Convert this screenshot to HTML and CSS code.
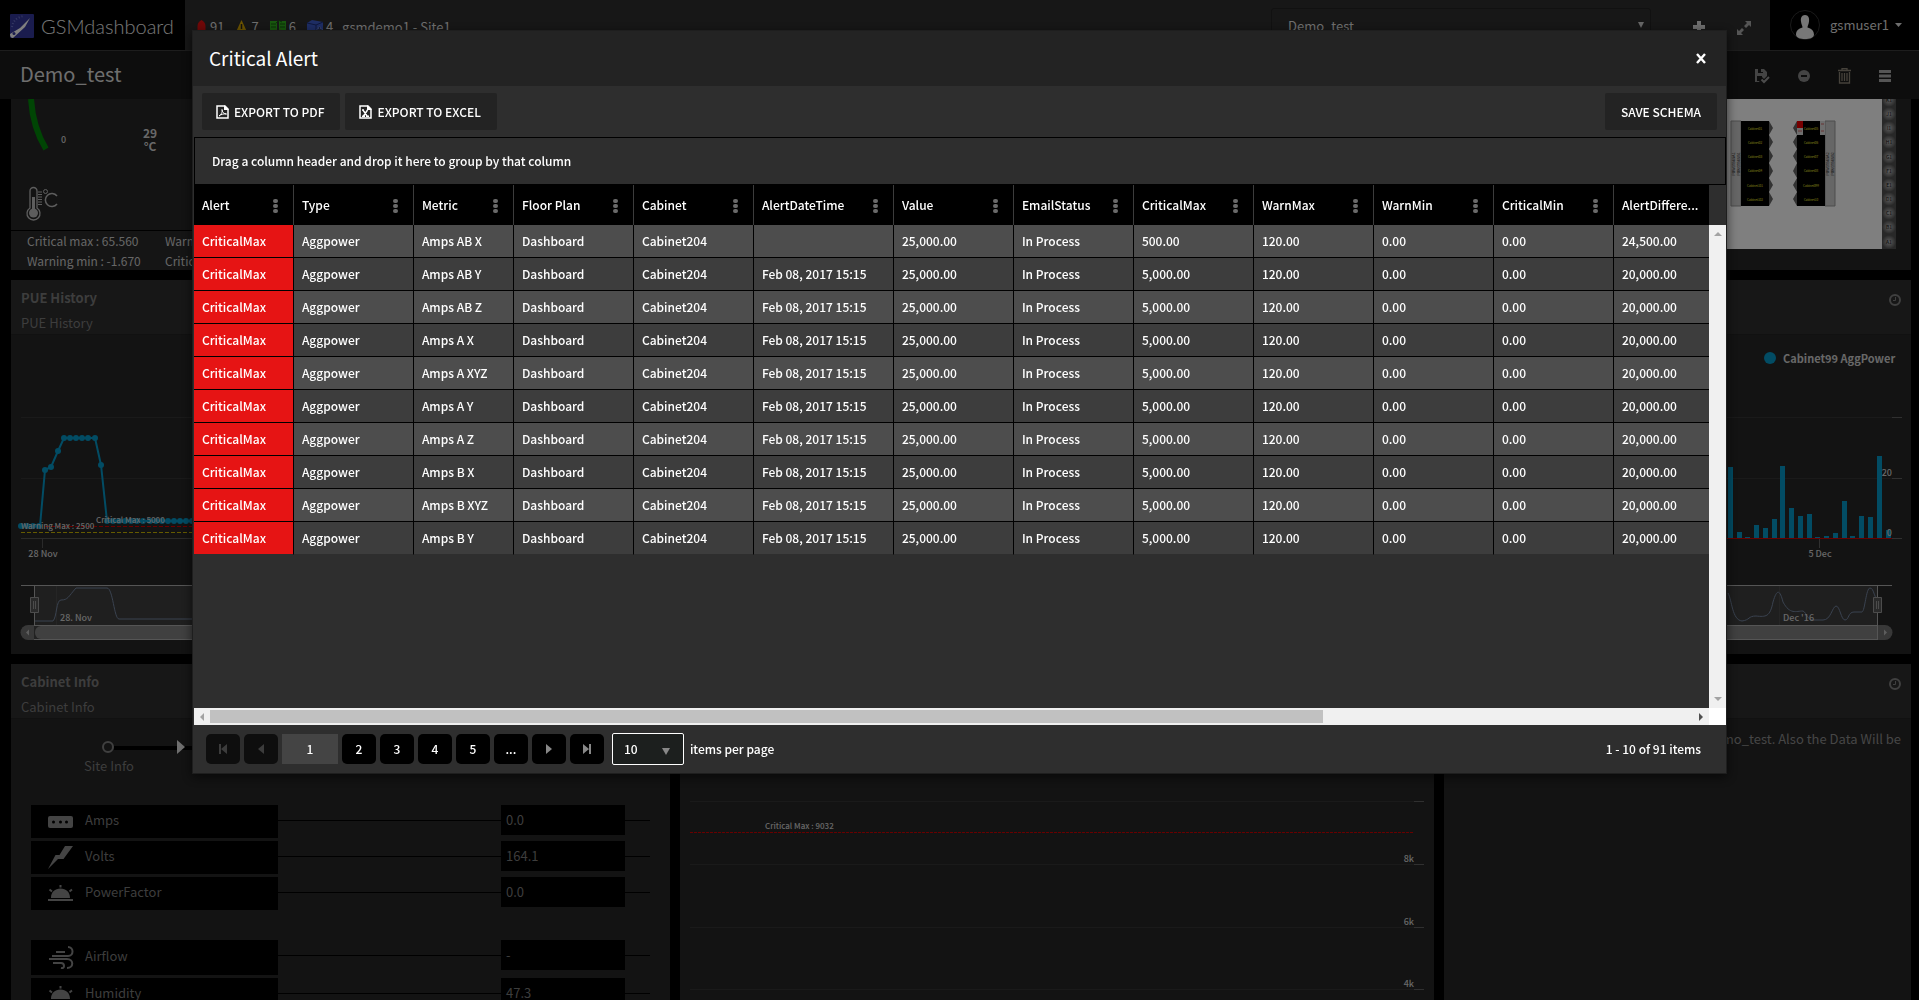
FILE: index.html
```html
<!DOCTYPE html>
<html lang="en">
<head>
<meta charset="utf-8">
<title>GSMdashboard</title>
<link rel="stylesheet" href="styles.css">
</head>
<body>
<div class="app">
  <header class="topbar">
    <a class="brand" href="#">
      <svg width="24" height="24" viewBox="0 0 24 24" aria-hidden="true"><rect width="24" height="24" rx="1" fill="#35399c"/><path d="M2 13C3 6 8 3 14 2" fill="none" stroke="#6d74c8" stroke-width="2" stroke-dasharray="1 2"/><path d="M0 20 10 14 20 4 15 13 3 24Q0 24 0 20Z" fill="#fff"/><circle cx="4" cy="19.500" r="1.500" fill="#35399c"/></svg>
      <span>GSMdashboard</span>
    </a>
    <ul class="status">
      <li><svg width="11" height="15" viewBox="0 0 11 15" aria-hidden="true"><path d="M1.500 12V6c0-3 2-5 4-6 2 1 4 3 4 6v6ZM0 13h11v2H0Z" fill="#e01010"/></svg>91</li>
      <li><svg width="13" height="15" viewBox="0 0 13 15" aria-hidden="true"><path d="M6.500 0 13 14H0Z" fill="#d8a800"/><path d="M6.500 4v5M6.500 10.500v2" stroke="#222" stroke-width="1.500"/></svg>7</li>
      <li><svg width="16" height="15" viewBox="0 0 16 15" aria-hidden="true"><path d="M0 1h7v12H0ZM9 1h7v12H9Z" fill="#2fae1c"/><path d="M1 4h5M1 7h5M10 4h5M10 7h5M6 3l3-2.500L12 2" stroke="#165c0c" fill="none"/><path d="M5 10l6 4M11 10l-6 4" stroke="#d22" stroke-width="1.500"/></svg>6</li>
      <li><svg width="16" height="15" viewBox="0 0 16 15" aria-hidden="true"><path d="M0 3 5 0l11 2v12H0Z" fill="#3c5bc8"/><path d="M0 3l9 2 7-3M9 5v9" stroke="#1c2f78" fill="none"/><path d="M10 9h5v5h-5ZM11.500 9V7h2v2" fill="#111c4c" stroke="#8fa4f4" stroke-width=".5"/></svg>4</li>
      <li>gsmdemo1 - Site1</li>
    </ul>
    <select class="dashboard-select" aria-label="Dashboard"><option>Demo_test</option></select>
    <button class="icon-btn add" aria-label="Add"><svg width="12" height="12" viewBox="0 0 12 12"><path d="M4 0h4v4h4v4H8v4H4V8H0V4h4Z" fill="#ddd"/></svg></button>
    <button class="icon-btn expand" aria-label="Full screen"><svg width="14" height="14" viewBox="0 0 14 14"><path d="M8 0h6v6l-2-2-3 3-2-2 3-3ZM6 14H0V8l2 2 3-3 2 2-3 3Z" fill="#aaa"/></svg></button>
    <button class="user"><svg width="30" height="30" viewBox="0 0 30 30" aria-hidden="true"><circle cx="15" cy="15" r="14.500" fill="#000" stroke="#333"/><path d="M15 5c3.500 0 4.500 3 4 6.500-.3 3-1.500 4.500-1.500 6 4 1 6.500 3 6.500 7.500-1 3-4 4-9 4s-8-1-9-4c0-4.500 2.500-6.500 6.500-7.500 0-1.500-1.200-3-1.500-6C10.500 8 11.500 5 15 5Z" fill="#eee"/></svg>gsmuser1<svg width="7" height="4" viewBox="0 0 7 4" aria-hidden="true"><path d="M0 0h7L3.500 4Z" fill="#ddd"/></svg></button>
  </header>

  <div class="titlebar">
    <h1>Demo_test</h1>
    <div class="tools">
      <button class="icon-btn" aria-label="Save"><svg width="16" height="16" viewBox="0 0 16 16"><path d="M1 1h9l3 3v4l-3 3-2-2-3 5H1Z" fill="#888"/><path d="M4 1h5v4H4ZM3 8h5v5H3Z" fill="#1a1a1a"/><path d="M7 1h2v3H7Z" fill="#888"/><path d="M7.500 11.500 10 14l5-5" fill="none" stroke="#999" stroke-width="2"/></svg></button>
      <button class="icon-btn" aria-label="Remove"><svg width="12" height="12" viewBox="0 0 12 12"><circle cx="6" cy="6" r="6" fill="#888"/><path d="M3 5h6v2H3Z" fill="#1a1a1a"/></svg></button>
      <button class="icon-btn" aria-label="Delete"><svg width="13" height="16" viewBox="0 0 13 16"><path d="M0 2.500h13M4 2V.5h5V2M1.500 4v11h10V4M4 5v8M6.500 5v8M9 5v8" fill="none" stroke="#8c8476" stroke-width="1.300"/></svg></button>
      <button class="icon-btn" aria-label="Menu"><svg width="12" height="12" viewBox="0 0 12 12"><path d="M0 0h12v3H0ZM0 4.500h12v3H0ZM0 9h12v3H0Z" fill="#aaa"/></svg></button>
    </div>
  </div>

  <main class="board">
    <section class="panel temperature">
      <svg class="gauge" width="200" height="131" viewBox="11 99 200 131" role="img" aria-label="Temperature">
        <path d="M31 99Q33 128 46 149" fill="none" stroke="#008a08" stroke-width="6"/>
        <text class="t-small" x="61" y="143">0</text>
        <text class="t-gauge" x="150" y="138" text-anchor="middle">29</text>
        <text class="t-gauge" x="150" y="151" text-anchor="middle">°C</text>
        <g fill="none" stroke="#bbb"><path d="M30 208V191a3.500 3.500 0 0 1 7 0v17a6.500 6.500 0 1 1-7 0Z" stroke-width="1.300"/><path d="M33.500 197v14" stroke-width="3"/><path d="M38 192h4M38 194.500h4M38 197h4M38 199.500h4M38 202h4M38 204.500h4"/><circle cx="45.500" cy="191.500" r="2"/><path d="M57 196a6.500 6.500 0 1 0 0 8" stroke-width="1.500"/></g>
        <circle cx="33.500" cy="213" r="4.500" fill="#bbb"/>
      </svg>
      <ul class="limits"><li>Critical max : 65.560</li><li>Warning max : 60.000</li><li>Warning min : -1.670</li><li>Critical min : -9.000</li></ul>
    </section>
    <section class="panel floor">
      <svg width="200" height="171" viewBox="1711 99 200 171" role="img" aria-label="Floor plan">
        <defs><radialGradient id="knob"><stop offset="0" stop-color="#bbb"/><stop offset="1" stop-color="#505050"/></radialGradient></defs>
        <path d="M1711 99h171v150h-171Z" fill="#fff"/>
        <path d="M1731 121h10v85h-10ZM1825 121h10v85h-10Z" fill="#ccc" stroke="#999"/>
        <path d="M1769 121l4 7-4 7 4 7-4 7 4 7-4 7 4 8-4 7 4 7-4 7 4 7-4 7ZM1797 121l-4 7 4 7-4 7 4 7-4 7 4 7-4 8 4 7-4 7 4 7-4 7 4 7Z" fill="#666"/>
        <path d="M1741 121h28v85h-28ZM1797 121h28v85h-28Z" fill="#000"/>
        <path d="M1797 121h6v7h-6Z" fill="#e00"/><path d="M1797 128h6v7h-6ZM1820 121h5v14h-5Z" fill="#ddd"/>
        <path d="M1798 131h4M1821 124h3M1821 131h3" stroke="#c66"/>
        <g class="t-cab" text-anchor="middle">
          <text x="1755" y="130">Cabinet01</text><text x="1755" y="144">Cabinet02</text><text x="1755" y="158">Cabinet03</text><text x="1755" y="172">Cabinet04</text><text x="1755" y="187">Cabinet101</text><text x="1755" y="201">Cabinet102</text>
          <text x="1811" y="130">Cabinet05</text><text x="1811" y="144">Cabinet06</text><text x="1811" y="158">Cabinet07</text><text x="1811" y="172">Cabinet08</text><text x="1811" y="187">Cabinet099</text><text x="1811" y="201">Cabinet10</text>
        </g>
        <g class="t-bus" text-anchor="middle"><text transform="translate(1735 164) rotate(-90)">PowerBusA1</text><text transform="translate(1740 164) rotate(-90)">PowerBusB1</text><text transform="translate(1829 164) rotate(-90)">PowerBusA2</text><text transform="translate(1834 164) rotate(-90)">PowerBusB2</text></g>
        <path d="M1882 99h14v150h-14Z" fill="#505050"/>
        <g fill="url(#knob)"><circle cx="1889" cy="100" r="7"/><circle cx="1889" cy="114" r="7"/><circle cx="1889" cy="128" r="7"/><circle cx="1889" cy="142" r="7"/><circle cx="1889" cy="157" r="7"/><circle cx="1889" cy="171" r="7"/><circle cx="1889" cy="185" r="7"/><circle cx="1889" cy="199" r="7"/><circle cx="1889" cy="213" r="7"/><circle cx="1889" cy="227" r="7"/><circle cx="1889" cy="242" r="7"/></g>
        <g class="t-knob" text-anchor="middle"><text x="1889" y="102">K1</text><text x="1889" y="116">J1</text><text x="1889" y="130">I1</text><text x="1889" y="144">H1</text><text x="1889" y="159">G1</text><text x="1889" y="173">F1</text><text x="1889" y="187">E1</text><text x="1889" y="201">D1</text><text x="1889" y="215">C1</text><text x="1889" y="229">B1</text><text x="1889" y="244">A1</text></g>
      </svg>
    </section>

    <section class="panel history">
      <div class="panel-head"><div><h2>PUE History</h2><p>PUE History</p></div></div>
      <svg width="200" height="319" viewBox="11 335 200 319" role="img" aria-label="PUE history chart">
        <path d="M21 417.500h190M21 478.500h190" stroke="#343434"/>
        <path d="M21 538.500h190M42.500 539v9" stroke="#555" fill="none"/>
        <path d="M21 526.500h190" stroke="#d00000" stroke-dasharray="4 2"/>
        <path d="M21 532.500h190" stroke="#c8b400" stroke-dasharray="4 2"/>
        <path d="M21 526H40L45 470 51 467 58 451 64 438H95L101 465 107 521H211" fill="none" stroke="#0498c8" stroke-width="2"/>
        <g fill="#0498c8"><circle cx="21" cy="526" r="3"/><circle cx="27" cy="526" r="3"/><circle cx="33" cy="526" r="3"/><circle cx="39" cy="526" r="3"/><circle cx="45" cy="470" r="3"/><circle cx="51" cy="467" r="3"/><circle cx="58" cy="451" r="3"/><circle cx="64" cy="438" r="3"/><circle cx="70" cy="438" r="3"/><circle cx="76" cy="438" r="3"/><circle cx="82" cy="438" r="3"/><circle cx="88" cy="438" r="3"/><circle cx="95" cy="438" r="3"/><circle cx="101" cy="465" r="3"/><circle cx="107" cy="521" r="3"/><circle cx="113" cy="521" r="3"/><circle cx="119" cy="521" r="3"/><circle cx="125" cy="521" r="3"/><circle cx="131" cy="521" r="3"/><circle cx="137" cy="521" r="3"/><circle cx="143" cy="521" r="3"/><circle cx="150" cy="521" r="3"/><circle cx="156" cy="521" r="3"/><circle cx="162" cy="521" r="3"/><circle cx="168" cy="521" r="3"/><circle cx="174" cy="521" r="3"/><circle cx="180" cy="521" r="3"/><circle cx="186" cy="521" r="3"/><circle cx="192" cy="521" r="3"/></g>
        <text class="t-plot" x="21" y="529">Warning Max : 2500</text>
        <text class="t-plot" x="96" y="523">Critical Max : 5000</text>
        <text class="t-axis" x="43" y="557" text-anchor="middle">28 Nov</text>
        <path d="M34 586h177v39H34Z" fill="#3e3e3e"/><path d="M56.500 586v39" stroke="#4a4a4a"/>
        <path d="M34 621H53C57 617 56 600 61 600C68 600 68 597 76 588H107C113 588 114 619 119 619H211" fill="none" stroke="#7485a0"/>
        <path d="M21 585.500h190M34.500 586v54" stroke="#aaa"/>
        <text class="t-axis" x="60" y="621">28. Nov</text>
        <path d="M34 626h177v13H34Z" fill="#444"/><rect x="35" y="626" width="300" height="13" rx="6" fill="#808080"/>
        <path d="M34 625.500h177M34 639.500h177" stroke="#aaa"/>
        <path d="M34 625H28a7.500 7.500 0 0 0 0 15h6Z" fill="#707070"/><path d="M29 629.500v6l-3-3Z" fill="#bbb"/>
        <path d="M30.500 597.500h8v15h-8Z" fill="#555" stroke="#999"/><path d="M33.500 601v8M35.500 601v8" stroke="#999"/>
      </svg>
    </section>
    <section class="panel power">
      <div class="panel-head"><svg class="clock" width="12" height="12" viewBox="0 0 12 12" aria-hidden="true"><circle cx="6" cy="6" r="5" fill="none" stroke="#808080" stroke-width="2"/><path d="M6.500 3v3.500H4" fill="none" stroke="#808080"/></svg></div>
      <svg width="200" height="319" viewBox="1711 335 200 319" role="img" aria-label="Cabinet99 AggPower chart">
        <circle cx="1770" cy="358" r="6" fill="#0498c8"/><text class="t-legend" x="1783" y="363">Cabinet99 AggPower</text>
        <path d="M1711 417.500h181M1711 478.500h181" stroke="#343434"/><path d="M1892 417.500h10M1892 478.500h10M1892 538.500h10M1819.500 539v9" stroke="#606060"/>
        <path d="M1728 467h5v71h-5ZM1737 532h5v6h-5ZM1745 537h5v1h-5ZM1754 525h5v13h-5ZM1763 528h5v10h-5ZM1772 519h5v19h-5ZM1780 466h5v72h-5ZM1789 508h5v30h-5ZM1798 516h5v22h-5ZM1807 514h5v24h-5ZM1815 537h5v1h-5ZM1824 536h5v2h-5ZM1833 533h5v5h-5ZM1842 501h5v37h-5ZM1850 536h5v2h-5ZM1859 516h5v22h-5ZM1868 517h5v21h-5ZM1877 456h5v82h-5ZM1886 530h5v8h-5Z" fill="#0498c8"/>
        <path d="M1711 538.500h181" stroke="#d00000"/>
        <text class="t-axis" x="1892" y="476" text-anchor="end">20</text><text class="t-axis" x="1892" y="536" text-anchor="end">0</text><text class="t-axis" x="1820" y="557" text-anchor="middle">5 Dec</text>
        <path d="M1711 586h166v39h-166Z" fill="#3e3e3e"/><path d="M1779.500 586v39" stroke="#4a4a4a"/>
        <path d="M1728 593C1732 600 1732 620 1742 621C1750 620 1748 616 1756 616C1766 617 1770 617 1773 602C1777 588 1780 590 1783 602C1790 615 1796 611 1803 611C1807 613 1807 620 1813 620H1823C1831 620 1832 607 1836 606C1840 606 1841 620 1845 620C1849 620 1848 612 1854 612H1862C1865 611 1866 588 1870 588C1874 588 1874 598 1877 598" fill="none" stroke="#7485a0"/>
        <path d="M1711 585.500h181M1877.500 586v54" stroke="#aaa"/>
        <text class="t-axis" x="1783" y="621">Dec '16</text>
        <path d="M1711 626h166v13h-166Z" fill="#808080"/><path d="M1711 625.500h166M1711 639.500h166" stroke="#aaa"/>
        <path d="M1878 625h7a7.500 7.500 0 0 1 0 15h-7Z" fill="#707070"/><path d="M1884 629.500v6l3-3Z" fill="#bbb"/>
        <path d="M1873.500 597.500h8v15h-8Z" fill="#555" stroke="#999"/><path d="M1876.500 601v8M1878.500 601v8" stroke="#999"/>
      </svg>
    </section>

    <section class="panel cabinet">
      <div class="panel-head"><div><h2>Cabinet Info</h2><p>Cabinet Info</p></div></div>
      <div class="steps"><svg width="130" height="16" viewBox="0 0 130 16" aria-hidden="true"><path d="M19 9h111" stroke="#000" stroke-width="4"/><circle cx="13" cy="8" r="5" fill="none" stroke="#808080" stroke-width="2"/><path d="M82 1l8 7-8 7Z" fill="#ddd"/></svg><span>Site Info</span></div>
      <ul class="readings">
        <li><span class="name"><svg width="26" height="24" viewBox="0 0 26 24" aria-hidden="true"><rect y="6" width="25" height="12" rx="2" fill="#888"/><circle cx="5.500" cy="12" r="1.500"/><circle cx="12.500" cy="12" r="1.500"/><circle cx="18.500" cy="12" r="1.500"/></svg><span>Amps</span></span><span class="value">0.0</span></li>
        <li><span class="name"><svg width="26" height="24" viewBox="0 0 26 24" aria-hidden="true"><path d="M17 0h8l-9.500 13H10L0 23 7.500 9h4Z" fill="#888"/></svg><span>Volts</span></span><span class="value">164.1</span></li>
        <li><span class="name"><svg width="26" height="24" viewBox="0 0 26 24" aria-hidden="true"><path d="M3 16c0-6 4-9.500 9.500-9.500S22 10 22 16ZM0 17h25v2H0Z" fill="#888"/><path d="M12.500 3v2.500M1.500 7.500l2.500 2M24 7.500l-2.500 2" stroke="#888" stroke-width="2"/></svg><span>PowerFactor</span></span><span class="value">0.0</span></li>
        <li class="group"><span class="name"><svg width="26" height="24" viewBox="0 0 26 24" aria-hidden="true"><path d="M8 6h9M4 10h16c6 0 6-9 0-9M1 13h18c7 0 7 9 0 9M5 17h8c4 0 4 6 0 5" fill="none" stroke="#888" stroke-width="2"/></svg><span>Airflow</span></span><span class="value">-</span></li>
        <li><span class="name"><svg width="26" height="24" viewBox="0 0 26 24" aria-hidden="true"><path d="M3 16c0-6 4-9.500 9.500-9.500S22 10 22 16ZM0 17h25v2H0Z" fill="#888"/><path d="M12.500 3v2.500M1.500 7.500l2.500 2M24 7.500l-2.500 2" stroke="#888" stroke-width="2"/></svg><span>Humidity</span></span><span class="value">47.3</span></li>
      </ul>
    </section>
    <section class="panel limit-chart">
      <svg width="754" height="236" viewBox="680 764 754 236" role="img" aria-label="Critical limit chart">
        <path d="M690 801.500h724M690 864.500h724M690 927.500h724M690 989.500h724" stroke="#343434"/><path d="M1414 801.500h10M1414 864.500h10M1414 927.500h10M1414 989.500h10" stroke="#606060"/>
        <path d="M690 832.500h724" stroke="#d00000" stroke-dasharray="3 1"/>
        <text class="t-plot" x="765" y="829">Critical Max : 9032</text>
        <g class="t-axis" text-anchor="end"><text x="1414" y="862">8k</text><text x="1414" y="925">6k</text><text x="1414" y="987">4k</text></g>
      </svg>
    </section>
    <section class="panel note">
      <div class="panel-head"><svg class="clock" width="12" height="12" viewBox="0 0 12 12" aria-hidden="true"><circle cx="6" cy="6" r="5" fill="none" stroke="#808080" stroke-width="2"/><path d="M6.500 3v3.500H4" fill="none" stroke="#808080"/></svg></div>
      <p class="message">Demo_test. Also the Data Will be</p>
    </section>
  </main>
</div>

<div class="backdrop">
  <div class="modal" role="dialog" aria-labelledby="dlg-title">
    <div class="modal-head"><h2 id="dlg-title">Critical Alert</h2><button class="close" aria-label="Close"><svg width="10" height="11" viewBox="0 0 10 11"><path d="M1 1l8 9M9 1l-8 9" stroke="#fff" stroke-width="2.400"/></svg></button></div>
    <div class="toolbar">
      <button class="tool-btn"><svg width="13" height="14" viewBox="0 0 13 14" aria-hidden="true"><path d="M1 1h8l3 3v9H1Z" fill="none" stroke="#fff" stroke-width="1.500"/><path d="M8 0v5h5L8 0" fill="#fff"/><path d="M3 11c3-2 3.500-5 3-6.500C6 7 8 9 10.500 9 7 8.500 5 9.500 3 11Z" fill="none" stroke="#fff"/></svg>EXPORT TO PDF</button>
      <button class="tool-btn"><svg width="13" height="14" viewBox="0 0 13 14" aria-hidden="true"><path d="M1 1h8l3 3v9H1Z" fill="none" stroke="#fff" stroke-width="1.500"/><path d="M8 0v5h5L8 0" fill="#fff"/><path d="M4 5l4 6M8.500 5l-4 6M3 11.200h3M7 11.200h3M3 5h2" stroke="#fff" stroke-width="1.400"/></svg>EXPORT TO EXCEL</button>
      <button class="tool-btn save">SAVE SCHEMA</button>
    </div>
    <div class="group-drop">Drag a column header and drop it here to group by that column</div>
    <div class="grid">
      <div class="viewport">
        <table>
          <colgroup><col class="w99"><col class="w120"><col class="w100"><col class="w120"><col class="w120"><col class="w140"><col class="w120"><col class="w120"><col class="w120"><col class="w120"><col class="w120"><col class="w120"><col class="w120"></colgroup>
          <thead><tr><th>Alert</th><th>Type</th><th>Metric</th><th>Floor Plan</th><th>Cabinet</th><th>AlertDateTime</th><th>Value</th><th>EmailStatus</th><th>CriticalMax</th><th>WarnMax</th><th>WarnMin</th><th>CriticalMin</th><th>AlertDiffere...</th></tr></thead>
          <tbody>
            <tr><td>CriticalMax</td><td>Aggpower</td><td>Amps AB X</td><td>Dashboard</td><td>Cabinet204</td><td></td><td>25,000.00</td><td>In Process</td><td>500.00</td><td>120.00</td><td>0.00</td><td>0.00</td><td>24,500.00</td></tr>
            <tr><td>CriticalMax</td><td>Aggpower</td><td>Amps AB Y</td><td>Dashboard</td><td>Cabinet204</td><td>Feb 08, 2017 15:15</td><td>25,000.00</td><td>In Process</td><td>5,000.00</td><td>120.00</td><td>0.00</td><td>0.00</td><td>20,000.00</td></tr>
            <tr><td>CriticalMax</td><td>Aggpower</td><td>Amps AB Z</td><td>Dashboard</td><td>Cabinet204</td><td>Feb 08, 2017 15:15</td><td>25,000.00</td><td>In Process</td><td>5,000.00</td><td>120.00</td><td>0.00</td><td>0.00</td><td>20,000.00</td></tr>
            <tr><td>CriticalMax</td><td>Aggpower</td><td>Amps A X</td><td>Dashboard</td><td>Cabinet204</td><td>Feb 08, 2017 15:15</td><td>25,000.00</td><td>In Process</td><td>5,000.00</td><td>120.00</td><td>0.00</td><td>0.00</td><td>20,000.00</td></tr>
            <tr><td>CriticalMax</td><td>Aggpower</td><td>Amps A XYZ</td><td>Dashboard</td><td>Cabinet204</td><td>Feb 08, 2017 15:15</td><td>25,000.00</td><td>In Process</td><td>5,000.00</td><td>120.00</td><td>0.00</td><td>0.00</td><td>20,000.00</td></tr>
            <tr><td>CriticalMax</td><td>Aggpower</td><td>Amps A Y</td><td>Dashboard</td><td>Cabinet204</td><td>Feb 08, 2017 15:15</td><td>25,000.00</td><td>In Process</td><td>5,000.00</td><td>120.00</td><td>0.00</td><td>0.00</td><td>20,000.00</td></tr>
            <tr><td>CriticalMax</td><td>Aggpower</td><td>Amps A Z</td><td>Dashboard</td><td>Cabinet204</td><td>Feb 08, 2017 15:15</td><td>25,000.00</td><td>In Process</td><td>5,000.00</td><td>120.00</td><td>0.00</td><td>0.00</td><td>20,000.00</td></tr>
            <tr><td>CriticalMax</td><td>Aggpower</td><td>Amps B X</td><td>Dashboard</td><td>Cabinet204</td><td>Feb 08, 2017 15:15</td><td>25,000.00</td><td>In Process</td><td>5,000.00</td><td>120.00</td><td>0.00</td><td>0.00</td><td>20,000.00</td></tr>
            <tr><td>CriticalMax</td><td>Aggpower</td><td>Amps B XYZ</td><td>Dashboard</td><td>Cabinet204</td><td>Feb 08, 2017 15:15</td><td>25,000.00</td><td>In Process</td><td>5,000.00</td><td>120.00</td><td>0.00</td><td>0.00</td><td>20,000.00</td></tr>
            <tr><td>CriticalMax</td><td>Aggpower</td><td>Amps B Y</td><td>Dashboard</td><td>Cabinet204</td><td>Feb 08, 2017 15:15</td><td>25,000.00</td><td>In Process</td><td>5,000.00</td><td>120.00</td><td>0.00</td><td>0.00</td><td>20,000.00</td></tr>
          </tbody>
        </table>
      </div>
      <div class="vbar"><i class="tri up"></i><i class="tri down"></i></div>
      <div class="hbar"><i class="tri left"></i><span class="track"><span class="thumb"></span></span><i class="tri right"></i></div>
      <div class="corner"></div>
    </div>
    <div class="pager">
      <button class="pg" disabled aria-label="First page"><svg width="10" height="10" viewBox="0 0 10 10"><path d="M1 0h2v10H1ZM9 0v10L3 5Z"/></svg></button>
      <button class="pg" disabled aria-label="Previous page"><svg width="10" height="10" viewBox="0 0 10 10"><path d="M8 0v10L2 5Z"/></svg></button>
      <button class="pg current">1</button><button class="pg">2</button><button class="pg">3</button><button class="pg">4</button><button class="pg">5</button><button class="pg">...</button>
      <button class="pg" aria-label="Next page"><svg width="10" height="10" viewBox="0 0 10 10"><path d="M2 0v10l6-5Z"/></svg></button>
      <button class="pg" aria-label="Last page"><svg width="10" height="10" viewBox="0 0 10 10"><path d="M7 0h2v10H7ZM1 0v10l6-5Z"/></svg></button>
      <select id="page-size" class="page-size"><option>10</option></select>
      <label for="page-size">items per page</label>
      <span class="total">1 - 10 of 91 items</span>
    </div>
  </div>
</div>
</body>
</html>
```
FILE: styles.css
```css
* { box-sizing: border-box; }
body { margin: 0; background: #000; color: #fff; font: 13px/20px "Noto Sans CJK SC", "Open Sans", sans-serif; overflow: hidden; }
h1, h2, p, ul { margin: 0; padding: 0; font-weight: 400; }
ul { list-style: none; }
button, select { font: inherit; color: inherit; border: 0; background: none; padding: 0; margin: 0; }
svg { flex: none; }

.app { height: 100vh; display: flex; flex-direction: column; overflow: hidden; }

/* top navigation */
.topbar { height: 51px; flex: none; display: flex; align-items: center; background: #2e2e2e; border-bottom: 1px solid #3a3a3a; }
.brand { align-self: stretch; width: 185px; padding: 2px 0 0 10px; display: flex; align-items: center; gap: 7px; background: #000; color: #eee; text-decoration: none; font: 300 20px/24px Lato, sans-serif; }
.status { display: flex; gap: 11px; margin-left: 11px; padding-top: 4px; flex: 1; }
.status li { display: flex; align-items: center; gap: 3px; color: #ddd; }
.status li:last-child { margin-left: -2px; }
.dashboard-select { width: 380px; height: 34px; padding: 2px 10px 0 16px; border: 1px solid #222; border-radius: 3px; appearance: none; color: #ddd; background: url("data:image/svg+xml,%3Csvg xmlns='http://www.w3.org/2000/svg' width='6' height='6'%3E%3Cpath d='M0 0h6L3 6Z' fill='%23ccc'/%3E%3C/svg%3E") no-repeat right 6px center; }
.icon-btn { display: flex; align-items: center; justify-content: center; }
.add { margin-left: 42px; padding-top: 3px; }
.expand { margin: 6px 19px 0 32px; }
.user { align-self: stretch; width: 149px; padding-left: 20px; display: flex; align-items: center; gap: 10px; background: #000; color: #ddd; }
.user svg:last-child { margin-left: -4px; }

.titlebar { height: 48px; flex: none; display: flex; align-items: center; justify-content: space-between; padding: 0 28px 0 20px; background: #1a1a1a; }
.titlebar h1 { font-size: 20px; line-height: 24px; padding-bottom: 2px; color: #ddd; }
.tools { display: flex; align-items: center; gap: 28px; padding-top: 2px; }

/* widget board */
.board { flex: 1; min-height: 0; padding: 0 8px 0 11px; display: grid; grid-template-columns: 659fr 754fr 467fr; grid-template-rows: 171px 374px 1fr; gap: 10px; }
.panel { background: #262626; min-width: 0; overflow: hidden; display: flex; flex-direction: column; }
.history, .temperature { grid-column: 1 / 3; }
.limits { display: grid; grid-template-columns: 138px 138px; align-content: start; padding: 0 16px; border-top: 1px solid #000; background: #2a2a2a; flex: 1; font-size: 12px; color: #ccc; }
.panel > svg { display: block; }
.floor > svg, .power > svg { align-self: flex-end; }
.limit-chart { padding-top: 100px; }
.limit-chart svg { width: 100%; }
.panel-head { height: 55px; flex: none; padding: 8px 10px; background: #2e2e2e; border-bottom: 1px solid #222; display: flex; color: #7a7a7a; }
.panel-head h2 { font-size: 13px; font-weight: 700; line-height: 20px; margin-bottom: 5px; }
.panel-head p { line-height: 20px; }
.clock { margin: 6px 0 0 auto; }
.message { padding: 10px; color: #8c8c8c; text-align: right; white-space: nowrap; }
.steps { margin: 20px 0 0 84px; padding-bottom: 26px; display: flex; flex-direction: column; align-items: flex-start; color: #7a7a7a; }
.steps span { line-height: 22px; padding-bottom: 2px; }
.steps svg { margin-left: 0; }
.steps { margin-left: 73px; }
.steps svg { margin-left: 11px; }
.readings { padding: 0 20px; color: #7a7a7a; }
.readings li { display: flex; align-items: flex-start; margin-bottom: 3px; }
.name { width: 247px; height: 33px; display: flex; align-items: center; gap: 11px; padding-left: 17px; background: #000; }
.name span { padding-bottom: 4px; }
.value { order: 2; width: 124px; height: 30px; line-height: 30px; padding-left: 5px; background: #000; }
.readings li::before, .readings li::after { content: ""; height: 1px; margin-top: 15px; background: #000; }
.readings li::before { order: 1; flex: 1; }
.readings li::after { order: 3; width: 25px; }
.readings .group { margin-top: 30px; }
.group .name { height: 35px; }

/* chart text */
text { fill: #d0d0d0; }
.t-small, .t-axis { font-size: 9px; font-weight: 500; }
.t-plot { font-size: 8px; font-weight: 500; }
.t-gauge { font-size: 12px; font-weight: 700; }
.t-legend { font-size: 11px; font-weight: 700; }
.t-cab text { font-size: 3px; fill: #ee3; }
.t-bus text { font-size: 4px; fill: #222; }
.t-knob text { font-size: 5px; fill: #111; }

/* dialog */
.backdrop { position: fixed; inset: 0; background: rgba(0, 0, 0, .5); }
.modal { width: 80%; margin: 30px auto 0; background: #2e2e2e; border: 1px solid #1e1e1e; box-shadow: 0 3px 10px rgba(0, 0, 0, .6); font-size: 12px; font-weight: 500; }
.modal-head { height: 55px; padding: 0 20px 0 16px; display: flex; align-items: center; justify-content: space-between; background: #232323; }
.modal-head h2 { font-size: 19px; line-height: 24px; padding-bottom: 2px; }
.close { display: flex; }
.toolbar { height: 51px; padding: 0 9px; display: flex; align-items: center; gap: 5px; }
.tool-btn { height: 37px; padding: 0 16px 0 14px; display: flex; align-items: center; gap: 5px; border-radius: 2px; background: #232323; }
.save { margin-left: auto; padding: 0 16px; }
.group-drop { height: 48px; margin-left: 1px; padding: 0 17px; line-height: 46px; border: 1px solid #000; }
.grid { margin-left: 1px; display: grid; grid-template-columns: minmax(0, 1fr) 17px; grid-template-rows: 523px 17px; }
.viewport { overflow: hidden; }
table { width: 1539px; table-layout: fixed; border-collapse: separate; border-spacing: 0; }
.w99 { width: 99px; } .w100 { width: 100px; } .w120 { width: 120px; } .w140 { width: 140px; }
th, td { padding: 0 8px; text-align: left; font-weight: 500; white-space: nowrap; border-left: 1px solid #000; }
th:first-child, td:first-child { border-left: 0; }
th { height: 40px; padding-right: 20px; border-left-color: #3c3c3c; background: #000 url("data:image/svg+xml,%3Csvg xmlns='http://www.w3.org/2000/svg' width='5' height='15' fill='%236a6a6a'%3E%3Crect width='5' height='4' rx='2'/%3E%3Crect y='5' width='5' height='4' rx='2'/%3E%3Crect y='10' width='5' height='4' rx='2'/%3E%3C/svg%3E") no-repeat right 15px top 14px; }
td { height: 33px; background: #4d4d4d; border-bottom: 1px solid #000; }
tr:nth-child(even) td { background: #3d3d3d; }
tbody tr td:first-child { background: #e61414; }
tr:last-child td { border-bottom-color: #2e2e2e; }
.vbar { margin-top: 40px; padding: 7px 0; background: #f0f0f0; display: flex; flex-direction: column; align-items: center; justify-content: space-between; }
.hbar { background: #f0f0f0; display: flex; align-items: center; }
.track { flex: 1; height: 13px; margin: 0 5px 0 6px; }
.thumb { display: block; width: 75%; height: 13px; background: #c1c1c1; }
.corner { background: #fff; }
.tri { border: 4px solid transparent; width: 0; height: 0; }
.up { border-top: 0; border-bottom-color: #a3a3a3; }
.down { border-bottom: 0; border-top-color: #a3a3a3; }
.left { border-left: 0; border-right-color: #a3a3a3; margin-left: 6px; }
.right { border-right: 0; border-left-color: #505050; margin-right: 6px; }
.pager { height: 48px; padding: 0 25px 0 13px; display: flex; align-items: center; gap: 4px; }
.pg { width: 34px; height: 30px; display: flex; align-items: center; justify-content: center; border-radius: 5px; background: #000; }
.pg svg { fill: #888; }
.pg:disabled { background: #0e0e0e; }
.pg:disabled svg { fill: #3c3c3c; }
.current { width: 56px; border-radius: 0; background: #444; }
.page-size { width: 72px; height: 32px; margin: 0 2px 0 4px; padding-left: 11px; border: 1px solid #fff; border-radius: 2px; appearance: none; background: url("data:image/svg+xml,%3Csvg xmlns='http://www.w3.org/2000/svg' width='8' height='7'%3E%3Cpath d='M0 0h8L4 7Z' fill='%23888'/%3E%3C/svg%3E") no-repeat right 13px top 14px #1c1f1e; }
.total { margin-left: auto; }
```
